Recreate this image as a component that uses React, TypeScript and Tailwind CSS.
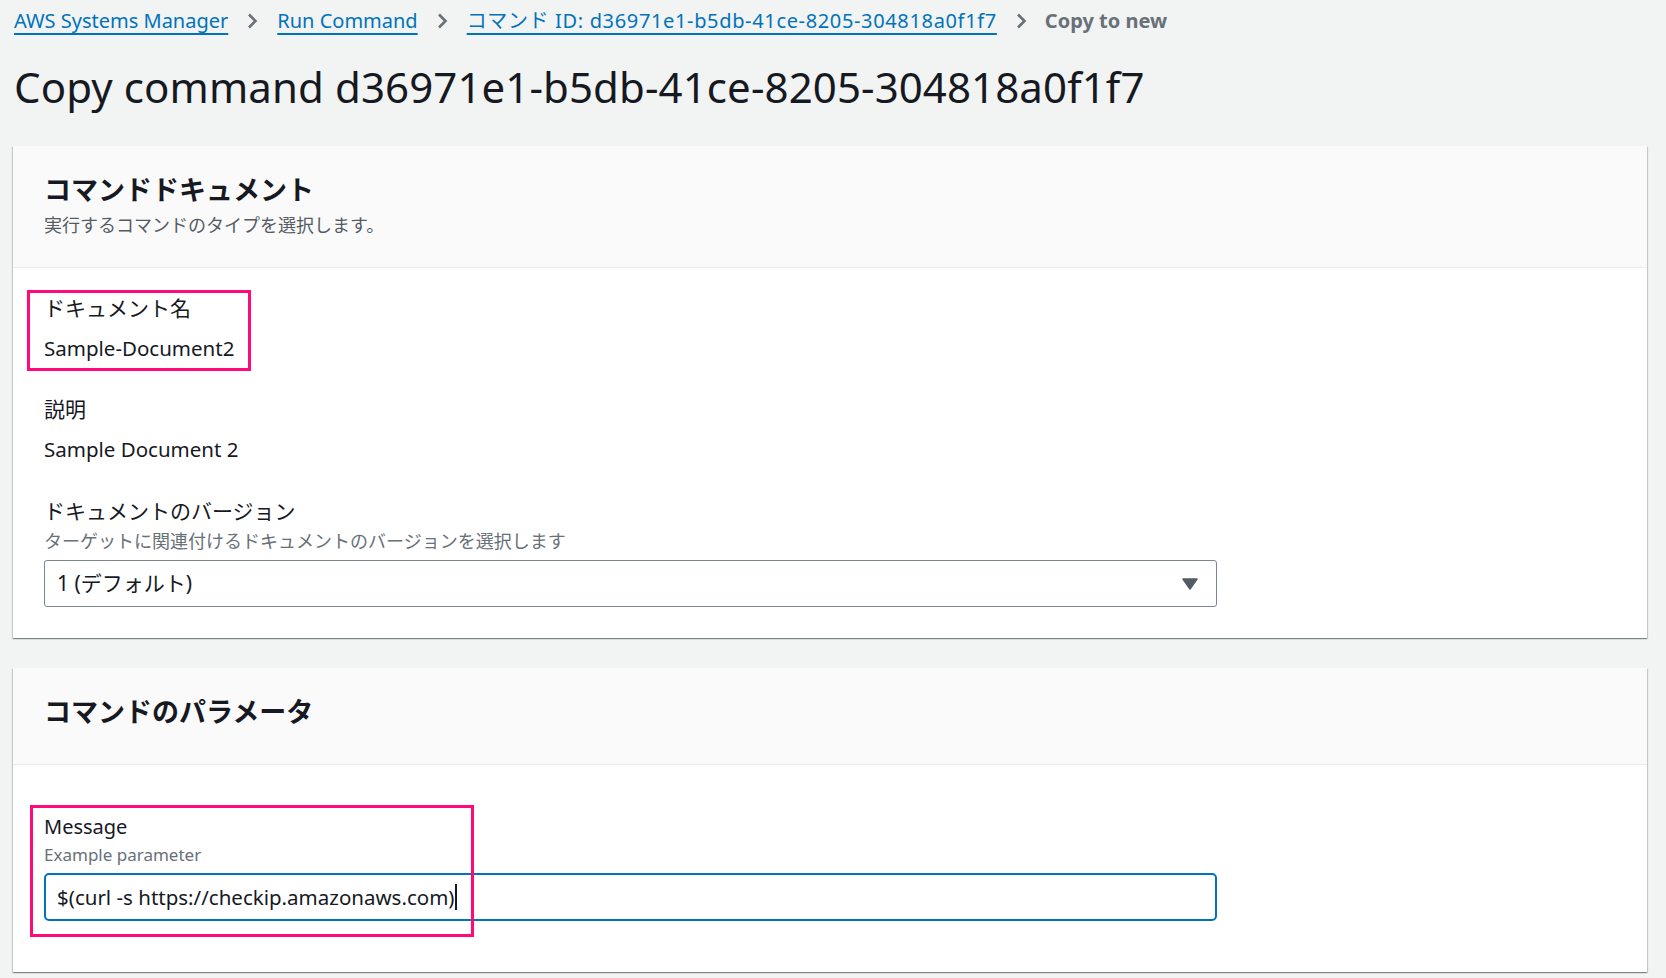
import React from 'react';

const Chevron = () => (
  <svg width="12" height="18" viewBox="0 0 12 18" className="mx-[18px] shrink-0" aria-hidden>
    <path d="M3 2.5 L9.5 9 L3 15.5" fill="none" stroke="#687078" strokeWidth="2.6" />
  </svg>
);

const Caret = () => (
  <svg width="16" height="12" viewBox="0 0 16 12" aria-hidden>
    <path d="M1 1 H15 L8 11 Z" fill="#545b64" stroke="#545b64" strokeWidth="1.5" strokeLinejoin="round" />
  </svg>
);

// annotation frame drawn over a field
const Highlight: React.FC<{ className: string }> = ({ className }) => (
  <div className={`pointer-events-none absolute border-[3px] border-[#ff0a78] ${className}`} />
);

interface CardProps {
  title: string;
  description?: string;
  headerClass: string;
  bodyClass: string;
  children: React.ReactNode;
}

const Card: React.FC<CardProps> = ({ title, description, headerClass, bodyClass, children }) => (
  <section className="bg-white shadow-[0_1px_1px_0_rgba(0,28,36,0.3),1px_1px_1px_0_rgba(0,28,36,0.15),-1px_1px_1px_0_rgba(0,28,36,0.15)]">
    <div className={`bg-[#fafafa] border-b border-[#eaeded] px-[31px] ${headerClass}`}>
      <h2 className="text-[27px] leading-[34px] font-bold text-[#16191f]">{title}</h2>
      {description && <p className="mt-[6px] text-[18px] leading-[24px] text-[#545b64]">{description}</p>}
    </div>
    <div className={`px-[31px] ${bodyClass}`}>{children}</div>
  </section>
);

export default function App() {
  const crumbs = [
    { label: 'AWS Systems Manager', cls: '' },
    { label: 'Run Command', cls: '' },
    { label: 'コマンド ID: d36971e1-b5db-41ce-8205-304818a0f1f7', cls: 'tracking-[0.65px]' },
  ];

  return (
    <div className="min-h-screen bg-[#f2f3f3] pl-[13px] pr-[19px] font-['Noto_Sans','Noto_Sans_CJK_JP',sans-serif] text-[#16191f]">
      {/* Breadcrumbs */}
      <nav className="flex items-center pt-[3px] h-[38px] text-[20px] leading-[28px]">
        {crumbs.map((c) => (
          <React.Fragment key={c.label}>
            <a className={`text-[#0073bb] underline decoration-2 underline-offset-[5px] pl-[1px] ${c.cls}`}>{c.label}</a>
            <Chevron />
          </React.Fragment>
        ))}
        <span className="font-bold text-[#687078]">Copy to new</span>
      </nav>

      {/* Page title */}
      <h1 className="pt-[21px] pb-[31px] pl-[1px] text-[42px] leading-[56px] tracking-[0.1px] font-normal text-[#16191f]">
        Copy command d36971e1-b5db-41ce-8205-304818a0f1f7
      </h1>

      <div className="flex flex-col gap-[30px]">
        {/* Command document */}
        <Card
          title="コマンドドキュメント"
          description="実行するコマンドのタイプを選択します。"
          headerClass="pt-[27px] pb-[30px]"
          bodyClass="pt-[26px] pb-[31px]"
        >
          <div className="relative w-fit">
            <Highlight className="-left-[17px] -top-[4px] w-[224px] h-[81px]" />
            <div className="text-[21px] leading-[28px]">ドキュメント名</div>
            <div className="mt-[12px] text-[20.5px] leading-[28px]">Sample-Document2</div>
          </div>

          <div className="mt-[33px]">
            <div className="text-[21px] leading-[28px]">説明</div>
            <div className="mt-[12px] text-[20.5px] leading-[28px]">Sample Document 2</div>
          </div>

          <div className="mt-[34px]">
            <div className="text-[21px] leading-[28px]">ドキュメントのバージョン</div>
            <div className="text-[18px] leading-[24px] text-[#687078] mt-[4px]">
              ターゲットに関連付けるドキュメントのバージョンを選択します
            </div>
            <div className="mt-[7px] w-[1173px] h-[47px] border border-[#7d8590] rounded-[3px] flex items-center justify-between pl-[12px] pr-[18px]">
              <span className="text-[21px]">1 (デフォルト)</span>
              <Caret />
            </div>
          </div>
        </Card>

        {/* Command parameters */}
        <Card
          title="コマンドのパラメータ"
          headerClass="pt-[27px] pb-[35px]"
          bodyClass="pt-[48px] pb-[51px]"
        >
          <div className="relative">
            <Highlight className="-left-[14px] -top-[8px] w-[444px] h-[132px]" />
            <div className="text-[20px] leading-[28px]">Message</div>
            <div className="mt-[2px] text-[17px] leading-[24px] text-[#687078]">Example parameter</div>
            <div className="mt-[6px] w-[1173px] h-[48px] border-2 border-[#0073bb] rounded-[5px] flex items-center pl-[11px]">
              <span className="text-[20.5px]">$(curl -s https://checkip.amazonaws.com)</span>
              <span className="ml-[1px] w-[2px] h-[26px] bg-[#16191f]" />
            </div>
          </div>
        </Card>
      </div>
    </div>
  );
}
